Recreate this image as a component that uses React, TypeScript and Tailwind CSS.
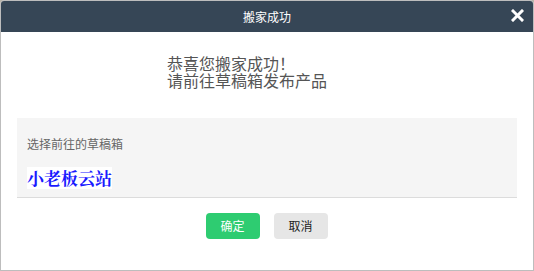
import React from 'react';

const cjk = { fontFamily: '"Noto Sans CJK SC", "Noto Sans", sans-serif' };

export default function App() {
  return (
    <div className="w-[534px] h-[271px] bg-[#b8b4aa] p-0" style={cjk}>
      <div className="w-[534px] h-[271px] flex flex-col bg-white border border-[#bdbdbd] rounded-t-[4px] overflow-hidden">
        {/* header */}
        <div className="relative h-[31px] shrink-0 bg-[#364656] flex items-center justify-center">
          <span className="text-white text-[12px] leading-none">搬家成功</span>
          <button className="absolute right-[8px] top-[7px] w-[15px] h-[15px] flex items-center justify-center">
            <svg width="13" height="13" viewBox="0 0 13 13">
              <path d="M2 2 L11 11 M11 2 L2 11" stroke="#fff" strokeWidth="3" strokeLinecap="square" />
            </svg>
          </button>
        </div>

        {/* message */}
        <div className="pt-[23px] pl-[166px] text-[16px] leading-[17px] text-[#555]">
          <p>恭喜您搬家成功！</p>
          <p>请前往草稿箱发布产品</p>
        </div>

        {/* draft box panel */}
        <div className="mx-[16px] mt-[29px] h-[80px] bg-[#f5f5f5] border-b border-[#dcdcdc] px-[10px] pt-[19px]">
          <div className="text-[12px] leading-[14px] text-[#666]">选择前往的草稿箱</div>
          <div className="mt-[15px]">
            <span className="inline-block bg-white text-[#1a1aff] text-[17px] leading-[22px] font-bold" style={{ fontFamily: '"Noto Serif CJK SC", "Noto Sans CJK SC", serif' }}>
              小老板云站
            </span>
          </div>
        </div>

        {/* actions */}
        <div className="flex justify-center gap-[14px] mt-[15px] pr-[1px]">
          <button className="w-[54px] h-[26px] rounded-[4px] bg-[#2ecc71] text-white text-[12px]">确定</button>
          <button className="w-[54px] h-[26px] rounded-[4px] bg-[#e6e6e6] text-[#222] text-[12px]">取消</button>
        </div>
      </div>
    </div>
  );
}
